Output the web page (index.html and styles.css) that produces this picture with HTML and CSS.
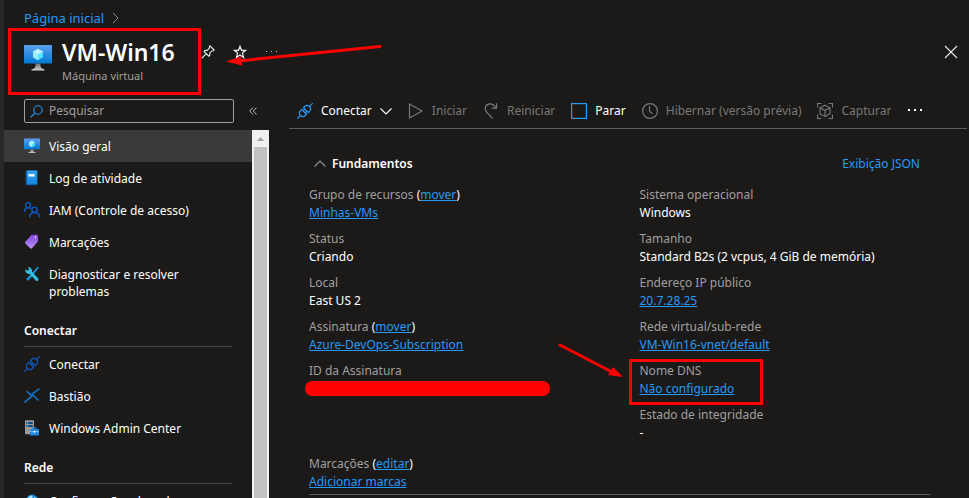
FILE: index.html
```html
<!DOCTYPE html>
<html lang="pt-BR">
<head>
<meta charset="utf-8">
<meta name="viewport" content="width=device-width, initial-scale=1">
<title>VM-Win16</title>
<link rel="stylesheet" href="styles.css">
</head>
<body>
<svg class="defs" aria-hidden="true">
  <defs>
    <linearGradient id="screen" x1="0" y1="0" x2="0" y2="1"><stop offset="0" stop-color="#5ea0ef"/><stop offset="1" stop-color="#0078d4"/></linearGradient>
    <linearGradient id="stand" x1="0" y1="0" x2="0" y2="1"><stop offset="0" stop-color="#707070"/><stop offset="1" stop-color="#d0d0d0"/></linearGradient>
    <linearGradient id="book" x1="0" y1="0" x2="0" y2="1"><stop offset="0" stop-color="#32a5f0"/><stop offset="1" stop-color="#1585dc"/></linearGradient>
    <linearGradient id="tag" x1="0" y1="0" x2="0" y2="1"><stop offset="0" stop-color="#8040d8"/><stop offset="1" stop-color="#b796f9"/></linearGradient>
    <symbol id="i-vm" viewBox="0 0 18 18">
      <rect x="0" y="0.6" width="18" height="12" rx="0.6" fill="url(#screen)"/>
      <path d="M12.4 16c-1.7-.3-1.9-1.5-1.9-3.4h-3c0 1.9-.2 3.100-1.900 3.400a.9.9 0 0 0-.9 1h8.600a.9.9 0 0 0-.9-1z" fill="url(#stand)"/>
      <path d="M9 3.100l3.200 1.800v3.600L9 10.400 5.800 8.500V4.900z" fill="#50e6ff"/>
      <path d="M9 3.100l3.200 1.800L9 6.800 5.800 4.900z" fill="#c3f1ff"/>
      <path d="M5.800 4.900L9 6.800v3.600L5.800 8.500z" fill="#9cebff"/>
    </symbol>
    <symbol id="i-plug" viewBox="0 0 16 16">
      <g fill="none" stroke="currentColor" stroke-width="1.200" transform="rotate(-45 8 8)">
        <path d="M-3 8h4.500M14.500 8H19"/>
        <path d="M6.800 4.600H5a3.400 3.400 0 0 0 0 6.800h1.800zM9.200 4.600H11a3.400 3.400 0 0 1 0 6.800H9.200zM6.800 6.600h2.400M6.800 9.400h2.400"/>
      </g>
    </symbol>
  </defs>
</svg>
<div class="page">
  <div class="rail"></div>
  <div class="blade">
    <header class="blade-header">
      <nav class="crumbs" aria-label="Trilha">
        <a href="#">Página inicial</a>
        <svg width="7" height="12" viewBox="0 0 7 12"><path d="M1 1l5 5-5 5" fill="none" stroke="#8a8886"/></svg>
      </nav>
      <div class="title-row">
        <div class="title-box">
          <svg class="title-icon" width="28" height="28"><use href="#i-vm"/></svg>
          <div>
            <h1>VM-Win16</h1>
            <p class="subtitle">Máquina virtual</p>
          </div>
        </div>
        <div class="title-actions">
          <button class="icon-btn" type="button" aria-label="Fixar"><svg width="14" height="14" viewBox="0 0 14 14"><path d="M9 .9L13.100 5l-1 .7-1.200.2-2.200 2.200.1 2.100-1 1L3 6.400l1-1 2.100.1 2.200-2.200.1-1.300zM5.300 8.700L.7 13.300" fill="none" stroke="#eee" stroke-width="1.100"/></svg></button>
          <button class="icon-btn" type="button" aria-label="Favorito"><svg width="14" height="14" viewBox="0 0 14 14"><path d="M7 1.300l1.500 4h4.200L9.300 8l1.300 4.500L7 9.900l-3.600 2.600L4.700 8 1.300 5.300h4.200z" fill="none" stroke="#eee" stroke-width="1.200"/></svg></button>
          <button class="icon-btn" type="button" aria-label="Mais"><svg width="14" height="14" viewBox="0 0 14 14"><path d="M1 6h1v1H1zM6 6h1v1H6zM11 6h1v1h-1z" fill="#ccc"/></svg></button>
        </div>
        <button class="icon-btn close" type="button" aria-label="Fechar"><svg width="14" height="14" viewBox="0 0 14 14"><path d="M1 1l12 12M13 1L1 13" stroke="#e8e8e8" stroke-width="1.100"/></svg></button>
        <svg class="title-arrow" width="158" height="24" viewBox="0 0 158 24"><path d="M154 3.500L12 18" stroke="#f00" stroke-width="3" stroke-linecap="round"/><path d="M0 18.500l15-5 1 9z" fill="#f00"/></svg>
      </div>
    </header>

    <div class="body">
      <aside class="side">
        <div class="search-row">
          <label class="search">
            <svg width="13" height="13" viewBox="0 0 13 13"><circle cx="8" cy="5" r="4.200" fill="none" stroke="#2899f5" stroke-width="1.100"/><path d="M5 8L.6 12.400" stroke="#2899f5" stroke-width="1.200"/></svg>
            <input type="text" placeholder="Pesquisar" aria-label="Pesquisar">
          </label>
          <button class="icon-btn collapse" type="button" aria-label="Recolher"><svg width="8" height="8" viewBox="0 0 8 8"><path d="M4 .5L.8 4 4 7.500M7.500.5L4.300 4l3.200 3.500" fill="none" stroke="#b8b6b4"/></svg></button>
        </div>
        <div class="menu-wrap">
          <nav class="menu" aria-label="Menu do recurso">
            <a class="item active" href="#"><svg width="16" height="16"><use href="#i-vm"/></svg><span>Visão geral</span></a>
            <a class="item" href="#"><svg width="16" height="16" viewBox="0 0 16 16"><path d="M1.500 1.500A1 1 0 0 1 2.500.5H13v14.800H2.500a1 1 0 0 1-1-1z" fill="#0c59a4"/><path d="M3 .5h9.500a.8.8 0 0 1 .8.8v12.200a.8.800 0 0 1-.8.8H3z" fill="url(#book)"/><rect x="4.500" y="4" width="6" height="2.500" fill="#fff"/></svg><span>Log de atividade</span></a>
            <a class="item" href="#"><svg width="16" height="16" viewBox="0 0 16 16"><g fill="none" stroke="#0f5bc4" stroke-width="1.300"><circle cx="4" cy="3.200" r="2.500"/><path d="M.5 10c0-2.800 1.400-4.300 3.500-4.300 1 0 2 .4 2.600 1"/><circle cx="10.500" cy="7.800" r="2.700"/><path d="M5.600 15.500c0-3 2-5 4.900-5s4.900 2 4.900 5"/></g></svg><span>IAM (Controle de acesso)</span></a>
            <a class="item" href="#"><svg width="16" height="16" viewBox="0 0 16 16"><path d="M8.200.8l4.300-.2a1.300 1.300 0 0 1 1.300 1.100l.4 4.600a2 2 0 0 1-.5 1.400L8 14.300a1.300 1.300 0 0 1-1.800 0L1.400 9.500a1.300 1.300 0 0 1 0-1.800l5.400-6.300A2 2 0 0 1 8.200.8z" fill="url(#tag)"/><circle cx="11.500" cy="3.200" r=".9" fill="#e8dcff"/></svg><span>Marcações</span></a>
            <a class="item" href="#"><svg width="16" height="16" viewBox="0 0 16 16"><path d="M14.800 1.200l-1.300-.5-6.300 7-4.700 4.700a1.500 1.500 0 0 0 2 2L9 9.500l5.200-7z" fill="#1490c8"/><path d="M1.300 3.200l2.300 1.600 1.500-1.300L4 1a4 4 0 0 1 4 4.800l6 6.500a1.500 1.500 0 0 1-2.200 2.200l-6-6.500A4 4 0 0 1 1.300 3.200z" fill="#32bedd"/></svg><span>Diagnosticar e resolver problemas</span></a>
            <h2>Conectar</h2>
            <a class="item plug" href="#"><svg width="16" height="16"><use href="#i-plug"/></svg><span>Conectar</span></a>
            <a class="item" href="#"><svg width="16" height="16" viewBox="0 0 16 16"><path d="M2.500 3.200L8 8 .5 14.500M15.500.8L8 6l6.500 6.500" fill="none" stroke="#0f6cbd" stroke-width="1.700"/></svg><span>Bastião</span></a>
            <a class="item" href="#"><svg width="16" height="16" viewBox="0 0 16 16"><rect x="1" y=".3" width="9" height="14" rx=".8" fill="#9a9a9a"/><path d="M2.300 2h6.400v1.900H2.300zM2.300 5h6.400v1.900H2.300z" fill="#0b4a80"/><path d="M3 2.500h1.300v.9H3zM3 5.500h1.300v.9H3z" fill="#50e6ff"/><rect x="6" y="9" width="9" height="6.500" rx=".8" fill="#1f86dd"/><path d="M8.800 9V7.800h3.400V9" fill="none" stroke="#1f86dd"/><path d="M6 11.300h9v.8H6z" fill="#9fd4ff"/><path d="M9.700 10.800h1.600v1.800H9.700z" fill="#fff"/></svg><span>Windows Admin Center</span></a>
            <h2>Rede</h2>
            <a class="item" href="#"><svg width="16" height="16" viewBox="0 0 16 16"><circle cx="8" cy="7.500" r="6" fill="#1c86d8"/><path d="M4 4.500l3-2 2 1-2 2.500zM10 4l2.500 1v2.500L10 7z" fill="#9fe3ff"/></svg><span>Configurações de rede</span></a>
          </nav>
          <div class="scrollbar" aria-hidden="true">
            <svg width="17" height="17" viewBox="0 0 17 17"><path d="M5 11l3.500-4L12 11z" fill="#a3a3a3"/></svg>
            <div class="thumb"></div>
          </div>
        </div>
      </aside>

      <main class="main">
        <div class="toolbar" role="toolbar" aria-label="Comandos">
          <button class="cmd connect" type="button"><svg width="16" height="16"><use href="#i-plug"/></svg><span>Conectar</span><svg width="12" height="12" viewBox="0 0 12 12"><path d="M.5 3.500L6 9l5.500-5.500" fill="none" stroke="#fff" stroke-width="1.100"/></svg></button>
          <button class="cmd" type="button" disabled><svg width="16" height="16" viewBox="0 0 16 16"><path d="M1.500 1l12.500 7-12.500 7z" fill="none" stroke="#797775" stroke-width="1.200"/></svg><span>Iniciar</span></button>
          <button class="cmd" type="button" disabled><svg width="16" height="16" viewBox="0 0 16 16"><path d="M9.500 15.500L4.300 9.800C.5 6 2.500.8 7 .8c2.800 0 4.500 1.600 5.800 4M13.500.3v4.800H8.700" fill="none" stroke="#797775" stroke-width="1.200"/></svg><span>Reiniciar</span></button>
          <button class="cmd" type="button"><svg width="16" height="16" viewBox="0 0 16 16"><rect x=".5" y=".5" width="15" height="15" fill="none" stroke="#2899f5" stroke-width="1.400"/></svg><span>Parar</span></button>
          <button class="cmd" type="button" disabled><svg width="16" height="16" viewBox="0 0 16 16"><circle cx="8" cy="8" r="7.400" fill="none" stroke="#797775" stroke-width="1.200"/><path d="M7.500 3v5.200l3 2.600" fill="none" stroke="#797775" stroke-width="1.200"/></svg><span>Hibernar (versão prévia)</span></button>
          <button class="cmd" type="button" disabled><svg width="16" height="16" viewBox="0 0 16 16"><path d="M.5 4.500v-4h4M11.500.5h4v4M15.500 11.500v4h-4M4.500 15.500h-4v-4M8 2.200l5 2.600v6L8 13.700l-5-2.900v-6zM3 4.800l5 2.800 5-2.800M8 7.600v6" fill="none" stroke="#797775" stroke-width="1.100"/></svg><span>Capturar</span></button>
          <button class="cmd" type="button" aria-label="Mais comandos"><svg width="16" height="16" viewBox="0 0 16 16"><path d="M1 6h2v2H1zM7 6h2v2H7zM13 6h2v2h-2z" fill="#fff"/></svg></button>
        </div>

        <section class="essentials">
          <div class="ess-head">
            <button class="toggle" type="button"><svg width="12" height="12" viewBox="0 0 12 12"><path d="M.5 8.500L6 3l5.500 5.500" fill="none" stroke="#979593" stroke-width="1.100"/></svg><span>Fundamentos</span></button>
            <a href="#">Exibição JSON</a>
          </div>
          <div class="columns">
            <dl>
              <div class="field"><dt>Grupo de recursos <span>(<a href="#">mover</a>)</span></dt><dd><a href="#">Minhas-VMs</a></dd></div>
              <div class="field"><dt>Status</dt><dd>Criando</dd></div>
              <div class="field"><dt>Local</dt><dd>East US 2</dd></div>
              <div class="field"><dt>Assinatura <span>(<a href="#">mover</a>)</span></dt><dd><a href="#">Azure-DevOps-Subscription</a></dd></div>
              <div class="field"><dt>ID da Assinatura</dt><dd class="redacted"></dd></div>
            </dl>
            <dl>
              <div class="field"><dt>Sistema operacional</dt><dd>Windows</dd></div>
              <div class="field"><dt>Tamanho</dt><dd>Standard B2s (2 vcpus, 4 GiB de memória)</dd></div>
              <div class="field"><dt>Endereço IP público</dt><dd><a href="#">20.7.28.25</a></dd></div>
              <div class="field"><dt>Rede virtual/sub-rede</dt><dd><a href="#">VM-Win16-vnet/default</a></dd></div>
              <div class="field marked"><dt>Nome DNS</dt><dd><a href="#">Não configurado</a><svg class="dns-arrow" width="66" height="36" viewBox="0 0 66 36"><path d="M2 2l50 26" stroke="#f00" stroke-width="3" stroke-linecap="round"/><path d="M65 34l-15-2 5-8z" fill="#f00"/></svg></dd></div>
              <div class="field"><dt>Estado de integridade</dt><dd>-</dd></div>
            </dl>
          </div>
          <dl class="tags">
            <div class="field"><dt>Marcações <span>(<a href="#">editar</a>)</span></dt><dd><a href="#">Adicionar marcas</a></dd></div>
          </dl>
        </section>
      </main>
    </div>
  </div>
</div>
</body>
</html>
```
FILE: styles.css
```css
*, *::before, *::after { box-sizing: border-box; }

body {
  margin: 0;
  background: #1b1a19;
  color: #fff;
  font: 12px/18px "Noto Sans", "Open Sans", sans-serif;
}

h1, h2, p, dl, dd { margin: 0; }
a { color: #2899f5; }
svg { display: block; flex: none; }
.defs { position: absolute; width: 0; height: 0; }

button {
  padding: 0;
  border: 0;
  background: none;
  color: inherit;
  font: inherit;
}

.page {
  display: flex;
  height: 100vh;
  overflow: hidden;
}

.rail {
  flex: none;
  width: 4px;
  background: #292827;
}

.blade {
  flex: 1;
  min-width: 0;
  display: flex;
  flex-direction: column;
}

/* Header */
.crumbs {
  display: flex;
  align-items: center;
  gap: 8px;
  padding: 9px 20px 1px;
  font-size: 13px;
}
.crumbs a { text-decoration: none; }

.title-row {
  position: relative;
  display: flex;
  align-items: flex-start;
  padding: 0 7px 0 4px;
}

.title-box {
  display: flex;
  gap: 10px;
  width: 193px;
  height: 67px;
  padding: 5px 13px;
  border: 3px solid #f00;
}
.title-icon { margin-top: 8px; }

h1 {
  font-size: 23px;
  line-height: 32px;
  font-weight: 600;
  white-space: nowrap;
}

.subtitle {
  color: #a19f9d;
  font-size: 11px;
  line-height: 16px;
}

.title-actions {
  display: flex;
  gap: 18px;
  padding-top: 17px;
}
.close { margin: 17px 4px 0 auto; }

.title-arrow {
  position: absolute;
  left: 222px;
  top: 15px;
}

/* Sidebar */
.body {
  flex: 1;
  min-height: 0;
  display: flex;
  gap: 20px;
}

.side {
  flex: none;
  width: 265px;
  display: flex;
  flex-direction: column;
}

.search-row {
  display: flex;
  align-items: center;
  gap: 15px;
  padding: 4px 0 7px 20px;
}

.search {
  display: flex;
  align-items: center;
  gap: 6px;
  width: 210px;
  height: 24px;
  padding: 0 5px;
  border: 1px solid #a19f9d;
  border-radius: 2px;
}

.search input {
  flex: 1;
  min-width: 0;
  padding: 0;
  border: 0;
  outline: 0;
  background: none;
  color: #fff;
  font: inherit;
}
.search input::placeholder { color: #a19f9d; opacity: 1; }

.menu-wrap {
  flex: 1;
  min-height: 0;
  display: flex;
}

.menu {
  flex: 1;
  overflow: hidden;
}

.item {
  display: flex;
  gap: 9px;
  padding: 8px 40px 8px 20px;
  color: #fff;
  line-height: 17px;
  text-decoration: none;
}
.item span { margin-bottom: -1px; }
.item:has(+ h2) { padding-bottom: 9px; }
.item.active { background: #3b3a39; }
.item.plug { color: #0f5bc4; }
.item.plug span { color: #fff; }

.menu h2 {
  margin: 0 20px 1px;
  padding: 14px 0 7px;
  border-bottom: 1px solid #484644;
  font-size: 12px;
  line-height: 17px;
  font-weight: 600;
}

.scrollbar {
  flex: none;
  width: 17px;
  display: flex;
  flex-direction: column;
  background: #f1f1f1;
}
.thumb {
  flex: 1;
  margin: 0 2px;
  background: #c1c1c1;
}

/* Toolbar */
.main {
  flex: 1;
  min-width: 0;
}

.toolbar {
  display: flex;
  align-items: center;
  gap: 16px;
  height: 34px;
  margin-right: 2px;
  padding: 0 0 2px 8px;
  border-bottom: 1px solid #605e5c;
}

.cmd {
  display: flex;
  align-items: center;
  gap: 8px;
  white-space: nowrap;
}
.cmd:disabled { color: #797775; }
.connect svg:first-child { color: #2899f5; }

/* Essentials */
.essentials {
  margin: 0 39px 0 20px;
  padding-bottom: 3px;
  border-bottom: 1px solid #605e5c;
}

.ess-head {
  display: flex;
  justify-content: space-between;
  padding: 26px 10px 13px 5px;
}
.ess-head a { text-decoration: none; }

.toggle {
  display: flex;
  align-items: center;
  gap: 6px;
  font-weight: 600;
}

.columns {
  display: grid;
  grid-template-columns: 1fr 1fr;
  gap: 40px;
}

.field {
  position: relative;
  margin-bottom: 8px;
  white-space: nowrap;
}
dt { color: #a19f9d; }
dt span { color: #fff; }

.redacted {
  width: 245px;
  height: 15px;
  margin: 1px -4px;
  border-radius: 7px;
  background: #f00;
}

.marked::after {
  content: "";
  position: absolute;
  left: -11px;
  top: -3px;
  width: 134px;
  height: 46px;
  border: 3px solid #f00;
}
.dns-arrow {
  position: absolute;
  left: -82px;
  top: -19px;
}

.tags { padding-top: 5px; }
.tags .field { margin: 0; }
```
